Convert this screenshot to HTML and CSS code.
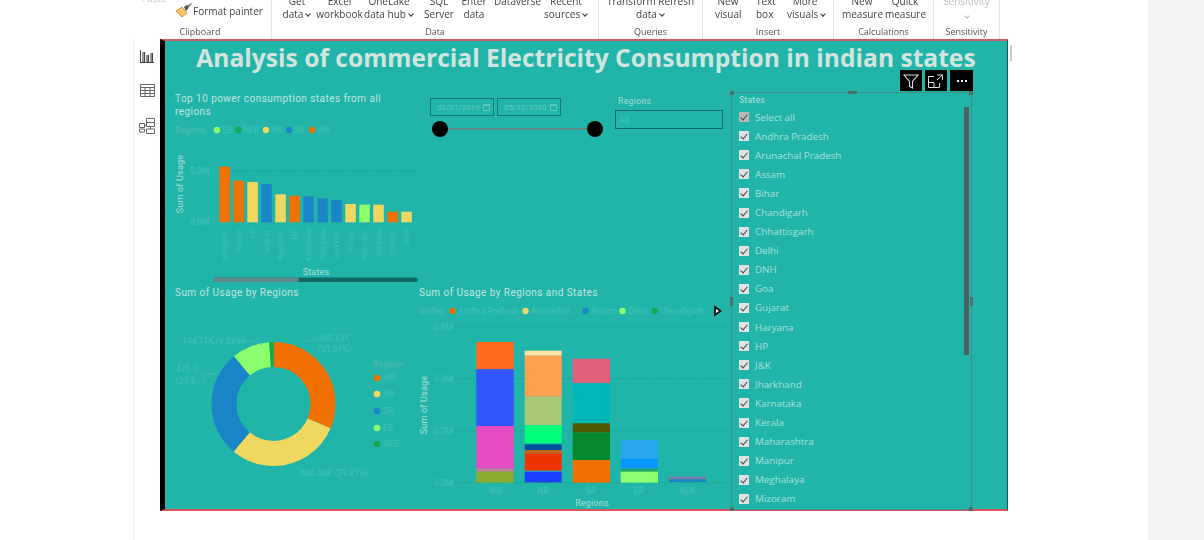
FILE: index.html
```html
<!DOCTYPE html>
<html lang="en">
<head>
<meta charset="utf-8">
<title>Analysis of commercial Electricity Consumption</title>
<link rel="stylesheet" href="styles.css">
</head>
<body>
<div class="app">
 <div class="main">
  <header class="ribbon">
    <section class="group g-clip">
      <div class="btns clip-row">
        <span class="paste">Paste</span>
        <span class="painter">
          <svg class="brush" width="18" height="16" viewBox="0 0 18 16"><path d="M1 8l6-4 5 6-5 4z" fill="#f7c46a" stroke="#c9822a" stroke-width=".8"/><path d="M9 4l3-2 2 1-1 3-2 2z" fill="#555"/><path d="M13 2l3-2 1 1-3 3z" fill="#8a8a8a"/></svg>
          Format painter</span>
      </div>
      <div class="glabel">Clipboard</div>
    </section>
    <section class="group g-data">
      <div class="btns">
        <div class="btn w-get">Get<br>data<i class="chev"></i></div>
        <div class="btn w-excel">Excel<br>workbook</div>
        <div class="btn w-lake">OneLake<br>data hub<i class="chev"></i></div>
        <div class="btn w-sql">SQL<br>Server</div>
        <div class="btn w-enter">Enter<br>data</div>
        <div class="btn w-verse">Dataverse<br>&nbsp;</div>
        <div class="btn w-recent">Recent<br>sources<i class="chev"></i></div>
      </div>
      <div class="glabel">Data</div>
    </section>
    <section class="group g-query">
      <div class="btns centered">
        <div class="btn">Transform Refresh<br>data<i class="chev"></i></div>
      </div>
      <div class="glabel">Queries</div>
    </section>
    <section class="group g-insert">
      <div class="btns">
        <div class="btn w-new">New<br>visual</div>
        <div class="btn w-text">Text<br>box</div>
        <div class="btn w-more">More<br>visuals<i class="chev"></i></div>
      </div>
      <div class="glabel">Insert</div>
    </section>
    <section class="group g-calc">
      <div class="btns">
        <div class="btn w-nm">New<br>measure</div>
        <div class="btn w-qm">Quick<br>measure</div>
      </div>
      <div class="glabel">Calculations</div>
    </section>
    <section class="group g-sens">
      <div class="btns centered">
        <div class="btn muted">Sensitivity<br><i class="chev pale"></i></div>
      </div>
      <div class="glabel">Sensitivity</div>
    </section>
  </header>

  <div class="workspace">
    <nav class="rail">
      <svg width="14" height="14" viewBox="0 0 14 14" fill="none" stroke="#444" stroke-width="1.100"><path d="M.5 1v12.500H14M3 13V3M4.600 13V3M7 13V6M8.500 13V6M11 13V4M12.500 13V4"/></svg>
      <svg width="15" height="13" viewBox="0 0 15 13" fill="none" stroke="#666" stroke-width="1"><path d="M.5.500h14v12H.500zM.5 3.500h14M.5 6.500h14M.5 9.500h14M5 3.500v9M10 3.500v9"/></svg>
      <svg width="16" height="16" viewBox="0 0 16 16" fill="none" stroke="#666" stroke-width="1"><path d="M7.500.500h8v4h-8zM7.500 4.500h8v4h-8zM7.500 11h8v4.500h-8zM.5 5.500h5v4h-5zM.5 11h5v3h-5zM5.500 7.500h2M11.500 8.500V11"/></svg>
    </nav>
    <main class="canvas">
      <h1 class="title">Analysis of commercial Electricity Consumption in indian states</h1>
      <div class="toolbar">
        <span class="tool t-a"><svg width="16" height="16" viewBox="0 0 16 16" fill="none" stroke="#ddd" stroke-width="1.100"><path d="M1 2h14L9.500 8.500V15l-3-1.500v-5z"/></svg></span>
        <span class="tool t-b"><svg width="16" height="14" viewBox="0 0 16 14" fill="none" stroke="#ddd" stroke-width="1"><path d="M6 2.500H.5v11h11V9M1 8.500h5v5M9 1h5.500v5M14.500 1 9 6"/></svg></span>
        <span class="tool t-c"><i></i><i></i><i></i></span>
      </div>
      <div class="report">
        <div class="col-left">
          <h2 class="ptitle top10">Top 10 power consumption states from all regions</h2>
          <svg class="chart" width="253" height="163" viewBox="165 122 253 163">
            <text class="fl b" x="175" y="133">Regions</text>
            <circle cx="217" cy="130" r="3.200" fill="#8cff6e"/><text class="fl" x="222" y="133">ER</text>
            <circle cx="238" cy="130" r="3.200" fill="#16a84f"/><text class="fl" x="243" y="133">NER</text>
            <circle cx="266" cy="130" r="3.200" fill="#f0d860"/><text class="fl" x="271" y="133">NR</text>
            <circle cx="289" cy="130" r="3.200" fill="#1a86c8"/><text class="fl" x="294" y="133">SR</text>
            <circle cx="312" cy="130" r="3.200" fill="#f07000"/><text class="fl" x="317" y="133">WR</text>
            <line class="grid" x1="232" x2="416" y1="171" y2="171"/>
            <text class="fl" x="190" y="174">0.2M</text><text class="fl" x="190" y="225">0.0M</text>
            <text class="axis" transform="translate(183 184) rotate(-90)" text-anchor="middle">Sum of Usage</text>
            <g class="o"><rect x="219.300" y="166.700" width="10.500" height="55.600"/><rect x="233.300" y="180.700" width="10.500" height="41.600"/><rect x="289.300" y="195.700" width="10.500" height="26.600"/><rect x="387.300" y="211.700" width="10.500" height="10.600"/></g>
            <g class="y"><rect x="247.300" y="182" width="10.500" height="40.300"/><rect x="275.300" y="194.300" width="10.500" height="28"/><rect x="345.300" y="204" width="10.500" height="18.300"/><rect x="373.300" y="204.700" width="10.500" height="17.600"/><rect x="401.300" y="211.700" width="10.500" height="10.600"/></g>
            <g class="bl"><rect x="261.300" y="184" width="10.500" height="38.300"/><rect x="303.300" y="196.300" width="10.500" height="26"/><rect x="317.300" y="198.300" width="10.500" height="24"/><rect x="331.300" y="200" width="10.500" height="22.300"/></g>
            <rect class="g" x="359.300" y="204.700" width="10.500" height="17.600"/>
            <g class="rot" text-anchor="end">
              <text transform="translate(227 229) rotate(-90)">Madhya P.</text>
              <text transform="translate(241 229) rotate(-90)">Gujarat</text>
              <text transform="translate(255 229) rotate(-90)">UP</text>
              <text transform="translate(269 229) rotate(-90)">Tamil N.</text>
              <text transform="translate(283 229) rotate(-90)">Rajasthan</text>
              <text transform="translate(297 229) rotate(-90)">MP</text>
              <text transform="translate(311 229) rotate(-90)">Karnataka</text>
              <text transform="translate(325 229) rotate(-90)">Telangana</text>
              <text transform="translate(339 229) rotate(-90)">Andhra P.</text>
              <text transform="translate(353 229) rotate(-90)">Punjab</text>
              <text transform="translate(367 229) rotate(-90)">West Ben.</text>
              <text transform="translate(381 229) rotate(-90)">Haryana</text>
              <text transform="translate(395 229) rotate(-90)">Chhattis.</text>
              <text transform="translate(409 229) rotate(-90)">Delhi</text>
            </g>
            <text class="axis" x="316" y="275" text-anchor="middle">States</text>
            <rect x="213" y="277.500" width="205" height="4.500" rx="2.200" fill="#0f6a64"/>
            <rect x="213" y="277.500" width="86" height="4.500" rx="2.200" fill="#5f8b89"/>
          </svg>
          <h2 class="ptitle regions">Sum of Usage by Regions</h2>
          <svg class="chart" width="253" height="210" viewBox="165 299 253 210">
            <g fill="none" stroke-width="25" transform="rotate(-90 273.500 404)">
              <circle cx="273.500" cy="404" r="49.500" pathLength="360" stroke="#f07000" stroke-dasharray="113 247" stroke-dashoffset="0"/>
              <circle cx="273.500" cy="404" r="49.500" pathLength="360" stroke="#f0d860" stroke-dasharray="107 253" stroke-dashoffset="-113"/>
              <circle cx="273.500" cy="404" r="49.500" pathLength="360" stroke="#1a86c8" stroke-dasharray="100.500 259.500" stroke-dashoffset="-220"/>
              <circle cx="273.500" cy="404" r="49.500" pathLength="360" stroke="#8cff6e" stroke-dasharray="35.500 324.500" stroke-dashoffset="-320.500"/>
              <circle cx="273.500" cy="404" r="49.500" pathLength="360" stroke="#16a84f" stroke-dasharray="4 356" stroke-dashoffset="-356"/>
            </g>
            <g class="leader"><path d="M238 341h16l8 4M203 374h14M305 342l10-3h3M300 470l3 3h-2"/></g>
            <text class="fl" x="182" y="344">144.71K (9.83%)</text>
            <text class="fl" x="318" y="341">540.13K</text><text class="fl" x="318" y="352">(21.61%)</text>
            <text class="fl" x="176" y="372">476.0...</text><text class="fl" x="176" y="384">(27.8...)</text>
            <text class="fl" x="301" y="476">606.06K (29.41%)</text>
            <text class="fl b" x="373" y="367">Regions</text>
            <circle cx="377" cy="378" r="3.300" fill="#f07000"/><text class="fl" x="383" y="381">WR</text>
            <circle cx="377" cy="394" r="3.300" fill="#f0d860"/><text class="fl" x="383" y="397">NR</text>
            <circle cx="377" cy="411" r="3.300" fill="#1a86c8"/><text class="fl" x="383" y="414">SR</text>
            <circle cx="377" cy="428" r="3.300" fill="#8cff6e"/><text class="fl" x="383" y="431">ER</text>
            <circle cx="377" cy="444" r="3.300" fill="#16a84f"/><text class="fl" x="383" y="447">NER</text>
          </svg>
        </div>
        <div class="col-mid">
          <div class="controls">
            <div class="dates">
              <div class="inputs">
                <span class="date">02/01/2019<i class="cal"></i></span>
                <span class="date">05/12/2020<i class="cal"></i></span>
              </div>
              <div class="slider"><i class="knob"></i><i class="knob"></i></div>
            </div>
            <div class="region-slicer">
              <div class="rs-label">Regions</div>
              <div class="rs-box">All</div>
            </div>
          </div>
          <h2 class="ptitle stacked">Sum of Usage by Regions and States</h2>
          <svg class="chart" width="313" height="210" viewBox="418 299 313 210">
            <g class="fl">
              <text class="b" x="419" y="314">States</text>
              <circle cx="452.500" cy="311" r="3.200" fill="#f07000"/><text x="458" y="314">Andhra Pradesh</text>
              <circle cx="525.500" cy="311" r="3.200" fill="#f0d860"/><text x="531" y="314">Arunachal ...</text>
              <circle cx="585.500" cy="311" r="3.200" fill="#1a86c8"/><text x="591" y="314">Assam</text>
              <circle cx="622.500" cy="311" r="3.200" fill="#8cff6e"/><text x="628" y="314">Bihar</text>
              <circle cx="654.500" cy="311" r="3.200" fill="#16a84f"/><text x="660" y="314">Chandigarh</text>
              <text x="434" y="330">0.6M</text><text x="434" y="382">0.4M</text><text x="434" y="434">0.2M</text><text x="434" y="486">0.0M</text>
              <g text-anchor="middle"><text x="495" y="494">WR</text><text x="543" y="494">NR</text><text x="591" y="494">SR</text><text x="639" y="494">ER</text><text x="687" y="494">NER</text></g>
            </g>
            <path d="M715 307l5.500 4-5.500 4z" fill="#fff" stroke="#111" stroke-width="1.800"/>
            <g class="grid"><line x1="455" x2="728" y1="326.700" y2="326.700"/><line x1="455" x2="728" y1="378.700" y2="378.700"/><line x1="455" x2="728" y1="430.700" y2="430.700"/><line x1="455" x2="728" y1="482.700" y2="482.700"/></g>
            <text class="axis" transform="translate(427 405) rotate(-90)" text-anchor="middle">Sum of Usage</text>
            <text class="axis" x="592" y="506" text-anchor="middle">Regions</text>
            <rect x="476.300" y="342" width="37.400" height="27.300" fill="#ff6a1f"/>
            <rect x="476.300" y="369.300" width="37.400" height="56.700" fill="#3355ff"/>
            <rect x="476.300" y="426" width="37.400" height="42.700" fill="#e54bc0"/>
            <rect x="476.300" y="468.700" width="37.400" height="3" fill="#c9808f"/>
            <rect x="476.300" y="471.700" width="37.400" height="11" fill="#8cac30"/>
            <rect x="524.700" y="350.700" width="37" height="5" fill="#fde3a8"/>
            <rect x="524.700" y="355.700" width="37" height="41" fill="#ffa050"/>
            <rect x="524.700" y="396.700" width="37" height="28.600" fill="#a9c876"/>
            <rect x="524.700" y="425.300" width="37" height="18" fill="#00ff78"/>
            <rect x="524.700" y="444.300" width="37" height="5.700" fill="#00509e"/>
            <rect x="524.700" y="450" width="37" height="3.300" fill="#c8651a"/>
            <rect x="524.700" y="453.300" width="37" height="17.300" fill="#ee3500"/>
            <rect x="524.700" y="471.700" width="37" height="10.700" fill="#1b3fff"/>
            <rect x="572.700" y="358.700" width="37.300" height="24.300" fill="#e0607a"/>
            <rect x="572.700" y="383" width="37.300" height="40.300" fill="#00b8b8"/>
            <rect x="572.700" y="423.300" width="37.300" height="9.300" fill="#4f5a00"/>
            <rect x="572.700" y="432.700" width="37.300" height="27.300" fill="#05882e"/>
            <rect x="572.700" y="460" width="37.300" height="22.700" fill="#f07000"/>
            <rect x="620.700" y="440" width="37.300" height="18.700" fill="#2aa6ee"/>
            <rect x="620.700" y="458.700" width="37.300" height="10" fill="#0897ff"/>
            <rect x="620.700" y="468.700" width="37.300" height="3" fill="#22a860"/>
            <rect x="620.700" y="471.700" width="37.300" height="11" fill="#8cff6e"/>
            <rect x="668.700" y="476.700" width="37.300" height="2.600" fill="#8878a8"/>
            <rect x="668.700" y="479.300" width="37.300" height="2.700" fill="#1a80c8"/>
          </svg>
        </div>
        <aside class="slicer">
          <div class="s-title">States</div>
          <ul class="s-list">
            <li class="all"><i class="cb"></i>Select all</li>
            <li><i class="cb"></i>Andhra Pradesh</li>
            <li><i class="cb"></i>Arunachal Pradesh</li>
            <li><i class="cb"></i>Assam</li>
            <li><i class="cb"></i>Bihar</li>
            <li><i class="cb"></i>Chandigarh</li>
            <li><i class="cb"></i>Chhattisgarh</li>
            <li><i class="cb"></i>Delhi</li>
            <li><i class="cb"></i>DNH</li>
            <li><i class="cb"></i>Goa</li>
            <li><i class="cb"></i>Gujarat</li>
            <li><i class="cb"></i>Haryana</li>
            <li><i class="cb"></i>HP</li>
            <li><i class="cb"></i>J&amp;K</li>
            <li><i class="cb"></i>Jharkhand</li>
            <li><i class="cb"></i>Karnataka</li>
            <li><i class="cb"></i>Kerala</li>
            <li><i class="cb"></i>Maharashtra</li>
            <li><i class="cb"></i>Manipur</li>
            <li><i class="cb"></i>Meghalaya</li>
            <li><i class="cb"></i>Mizoram</li>
          </ul>
          <span class="s-scroll"></span>
          <i class="h h-tl"></i><i class="h h-tr"></i><i class="h h-bl"></i><i class="h h-br"></i><i class="h h-tm"></i><i class="h h-ml"></i><i class="h h-mr"></i>
        </aside>
      </div>
    </main>
    <div class="gutter"><i class="stub"></i></div>
  </div>
 </div>
 <aside class="side"></aside>
</div>
</body>
</html>
```
FILE: styles.css
```css
* { box-sizing: border-box; }
html, body { margin: 0; height: 100%; background: #fff; overflow: hidden; }
body { font-family: "Open Sans", "Noto Sans", sans-serif; }
.app { width: 1204px; height: 540px; display: flex; filter: blur(0.4px); }
.main { width: 1148px; flex: none; display: flex; flex-direction: column; }
.side { width: 56px; flex: none; background: #f3f3f3; }

/* ribbon */
.ribbon { height: 39px; display: flex; padding-left: 133px; overflow: hidden; flex: none; font-size: 10px; color: #444; }
.group { display: flex; flex-direction: column; height: 39px; border-right: 1px solid #e6e6e6; flex: none; }
.g-clip { width: 139px; }
.g-data { width: 327px; }
.g-query { width: 104px; }
.g-insert { width: 131px; }
.g-calc { width: 100px; }
.g-sens { width: 66px; }
.btns { height: 26px; display: flex; align-items: flex-end; padding-bottom: 5px; line-height: 13px; white-space: nowrap; }
.clip-row { padding-bottom: 7px; }
.centered { justify-content: center; }
.btn { text-align: center; flex: none; }
.w-get { width: 30px; margin-left: 10px; }
.w-excel { width: 47px; margin-left: 4px; }
.w-lake { width: 50px; margin-left: 1px; }
.w-sql { width: 30px; margin-left: 10px; }
.w-enter { width: 30px; margin-left: 5px; }
.w-verse { width: 46px; margin-left: 5px; }
.w-recent { width: 44px; margin-left: 4px; }
.w-new { width: 26px; margin-left: 12px; }
.w-text { width: 17px; margin-left: 15px; }
.w-more { width: 36px; margin-left: 14px; }
.w-nm { width: 40px; margin-left: 8px; }
.w-qm { width: 40px; margin-left: 3px; }
.chev { display: inline-block; width: 4px; height: 4px; border: solid #333; border-width: 0 1.200px 1.200px 0; transform: rotate(45deg); margin: 0 1px 2px 3px; }
.chev.pale { border-color: #bbb; margin: 0; }
.muted { color: #bdbdbd; }
.glabel { height: 13px; margin-top: -1px; text-align: center; font-size: 9px; line-height: 13px; color: #555; }
.g-clip .glabel { padding-right: 4px; }
.paste { color: #c9c9c9; width: 42px; text-align: center; align-self: flex-start; margin-top: -8px; }
.painter { display: flex; align-items: center; }

/* workspace */
.workspace { flex: 1; display: flex; padding-left: 133px; min-height: 0; }
.rail { width: 27px; height: 501px; border-left: 1px solid #efefef; display: flex; flex-direction: column; align-items: center; gap: 21px; padding-top: 10px; flex: none; }
.canvas { width: 848px; height: 472px; flex: none; position: relative; background: #21b5a9; border-left: 5px solid #000; border-top: 2px solid #c95f68; border-bottom: 2px solid #d9545c; border-right: 1px solid #0d5f59; }
.title { margin: 0; height: 37px; font-size: 24.600px; line-height: 33px; font-weight: 700; color: #d3e4df; text-align: center; white-space: nowrap; }
.toolbar { position: absolute; top: 29px; left: 735px; display: flex; gap: 3px; }
.tool { width: 22px; height: 21px; background: #000; display: flex; align-items: center; justify-content: center; gap: 2px; }
.t-c { width: 23px; }
.t-c i { width: 2px; height: 2px; background: #eee; }
.report { display: flex; height: 431px; padding-top: 14px; }
.col-left { width: 253px; flex: none; display: flex; flex-direction: column; }
.col-mid { width: 313px; flex: none; display: flex; flex-direction: column; }
.ptitle { margin: 0; flex: none; font-family: Roboto, "Open Sans", sans-serif; font-weight: 400; font-size: 10px; letter-spacing: .45px; color: #c2e4df; }
.top10 { padding: 1px 10px 0; line-height: 12.500px; height: 30px; width: 235px; }
.regions { padding-left: 10px; height: 14px; line-height: 15px; }
.stacked { padding-left: 1px; height: 14px; line-height: 15px; }
.chart { display: block; flex: none; }
svg text { font-family: Roboto, "Open Sans", sans-serif; }
.fl, .fl text { font-size: 8.500px; fill: #41c1b5; }
.fl.b, .fl .b { font-weight: 700; fill: #43b9ad; }
.rot text { font-size: 7px; fill: #3fbfb3; }
.axis { font-size: 9px; fill: #a8dfd8; letter-spacing: .2px; }
.grid, .grid line { stroke: #178f86; stroke-width: 1; stroke-dasharray: 1 2; }
.o { fill: #f07000; }
.y { fill: #f0d860; }
.bl { fill: #1a86c8; }
.g { fill: #8cff6e; }
.leader { fill: none; stroke: #45c2b6; stroke-width: .6; }

/* date + region controls */
.controls { height: 193px; flex: none; display: flex; padding-top: 6px; padding-left: 12px; }
.dates { width: 185px; flex: none; }
.inputs { display: flex; gap: 3px; }
.date { width: 64px; height: 18px; border: 1px solid #137a72; color: #5fccc1; font-size: 8px; display: flex; align-items: center; justify-content: space-between; padding: 0 3px 0 6px; font-family: Roboto, sans-serif; }
.cal { width: 7px; height: 7px; border: 1px solid #5cc9be; border-top-width: 2px; }
.slider { margin: 5px 0 0 2px; width: 171px; height: 16px; display: flex; justify-content: space-between; background: linear-gradient(#6d7d7b, #6d7d7b) center / 100% 1.500px no-repeat; }
.knob { width: 16px; height: 16px; border-radius: 50%; background: #000; }
.region-slicer { width: 108px; margin-top: -4px; }
.rs-label { font-family: Roboto, sans-serif; font-size: 8.500px; letter-spacing: .4px; color: #a7dcd5; height: 16px; line-height: 14px; padding-left: 3px; }
.rs-box { height: 19px; border: 1px solid #0f6b66; font-size: 9px; color: #4cc6ba; line-height: 17px; padding-left: 3px; }

/* states slicer */
.slicer { width: 241px; height: 418px; flex: none; position: relative; border: 1px solid #3f9089; padding: 1px 0 0 7px; }
.s-title { font-family: Roboto, sans-serif; font-size: 8.500px; letter-spacing: .3px; color: #b6e2dc; height: 13.500px; line-height: 13px; }
.s-list { list-style: none; margin: 0; padding: 0; }
.s-list li { height: 19.100px; display: flex; align-items: center; gap: 6px; font-size: 9.800px; color: #a8e0d9; white-space: nowrap; }
.cb { width: 10px; height: 10px; background: #e2e2e2; flex: none; position: relative; }
.all .cb { background: #b9b9b9; }
.cb::after { content: ""; position: absolute; left: 3px; top: 1px; width: 3px; height: 6px; border: solid #444; border-width: 0 1.300px 1.300px 0; transform: rotate(40deg); }
.s-scroll { position: absolute; right: 2px; top: 14px; width: 5px; height: 248px; background: #4d5f5e; }
.h { position: absolute; background: #4f6f6c; }
.h-tl, .h-tr, .h-bl, .h-br { width: 4px; height: 4px; }
.h-tl { left: -2px; top: -2px; }
.h-tr { right: -2px; top: -2px; }
.h-bl { left: -2px; bottom: -2px; }
.h-br { right: -2px; bottom: -2px; }
.h-tm { left: 116px; top: -2px; width: 9px; height: 3px; }
.h-ml { left: -2px; top: 204px; width: 3px; height: 9px; }
.h-mr { right: -2px; top: 204px; width: 3px; height: 9px; }

.gutter { flex: none; width: 10px; padding: 6px 0 0 2px; }
.stub { display: block; width: 2px; height: 16px; background: #c9c9c9; }
```
